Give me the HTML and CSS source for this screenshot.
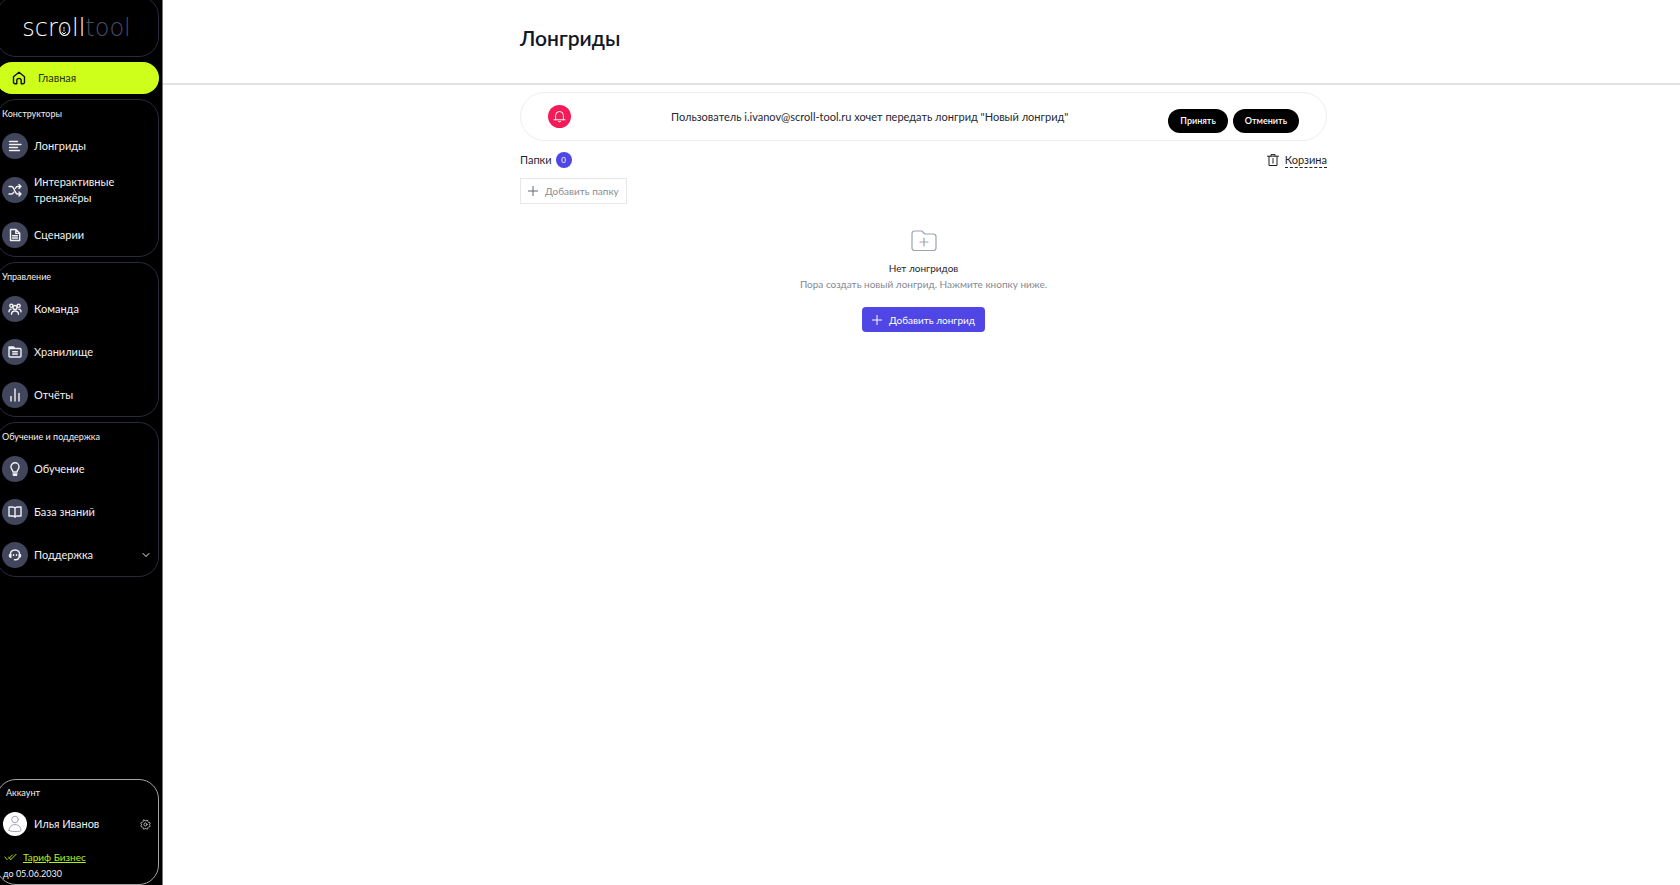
FILE: index.html
```html
<!DOCTYPE html>
<html lang="ru">
<head>
<meta charset="utf-8">
<title>Лонгриды</title>
<meta name="viewport" content="width=device-width, initial-scale=1">
<link rel="stylesheet" href="styles.css">
</head>
<body>
<aside class="sidebar">
  <a class="panel logo" href="#"><span class="logo-main">scr<span class="logo-o">o<svg class="logo-dots" viewBox="0 0 4 8"><path d="M2 .5v1M2 3v1M.5 5.500 2 7l1.500-1.500"/></svg></span>ll</span><span class="logo-tail">tool</span></a>
  <a class="home" href="#">
    <svg class="home-icon" viewBox="0 0 14 14"><path d="M1.500 5.800 7 1.200l5.500 4.600v5.400a1.500 1.500 0 0 1-1.500 1.500H9.200V9.600a2.200 2.200 0 0 0-4.400 0v3.100H3a1.500 1.500 0 0 1-1.500-1.500z"/></svg>
    Главная
  </a>
  <nav class="panel group">
    <h2 class="group-title">Конструкторы</h2>
    <a class="item" href="#"><span class="disc"><svg viewBox="0 0 14 14"><path d="M1.500 2.500h8M1.500 5.500h11.500M1.500 8.500h8M1.500 11.500h10"/></svg></span>Лонгриды</a>
    <a class="item" href="#"><span class="disc"><svg viewBox="0 0 14 14"><path d="M1 3.500h2.500c3 0 3 7.500 6 7.500H13M1 11h2.500c1 0 1.700-.8 2.200-1.800M7.500 5.300c.5-1 1-1.800 2-1.800H13M11 1.500l2 2-2 2M11 9l2 2-2 2"/></svg></span>Интерактивные тренажёры</a>
    <a class="item" href="#"><span class="disc"><svg viewBox="0 0 14 14"><path d="M2.500 1.500h5.500l3.700 3.700v7.300H2.500zM7.800 1.700v3.700h3.700M4.500 7.700h5M4.500 10h5"/></svg></span>Сценарии</a>
  </nav>
  <nav class="panel group">
    <h2 class="group-title">Управление</h2>
    <a class="item" href="#"><span class="disc"><svg viewBox="0 0 14 14"><circle cx="7" cy="5.500" r="2"/><circle cx="3.400" cy="3.800" r="1.600"/><circle cx="10.600" cy="3.800" r="1.600"/><path d="M3.500 12.300c0-4.400 7-4.400 7 0M1 9.800c0-1.600.7-2.500 2.200-2.700M13 9.800c0-1.600-.7-2.500-2.200-2.700"/></svg></span>Команда</a>
    <a class="item" href="#"><span class="disc"><svg viewBox="0 0 14 14"><path d="M1 2h4.500l1.300 1.500H12a1 1 0 0 1 1 1V11a1 1 0 0 1-1 1H2a1 1 0 0 1-1-1zM1 3.500h5M4.700 6.700h4.600M4.700 9h4.600"/></svg></span>Хранилище</a>
    <a class="item" href="#"><span class="disc"><svg viewBox="0 0 14 14"><path d="M3 8.500V13M7 1v12M11 5.500V13"/></svg></span>Отчёты</a>
  </nav>
  <nav class="panel group">
    <h2 class="group-title">Обучение и поддержка</h2>
    <a class="item" href="#"><span class="disc"><svg viewBox="0 0 14 14"><path d="M5 10C5 8 3 7.500 3 4.800a4 4 0 0 1 8 0C11 7.500 9 8 9 10zM5 12h4M5.500 13.500h3"/></svg></span>Обучение</a>
    <a class="item" href="#"><span class="disc"><svg viewBox="0 0 14 14"><path d="M7 3.200C6.500 2.400 5.700 2 4.700 2H1v9h4c1 0 1.600.4 2 1.200.4-.8 1-1.200 2-1.200h4V2H9.300C8.300 2 7.500 2.400 7 3.200zM7 3.200v9"/></svg></span>База знаний</a>
    <a class="item" href="#"><span class="disc"><svg viewBox="0 0 14 14"><path d="M2.500 8.500C1.500 4 4 2 7 2s5.500 2 4.500 6.500M2.800 6.200C1 6.200.8 9 2.800 9.300zM11.200 6.200c1.800 0 2 2.800 0 3.100zM11 9.500c-.5 1.500-1.500 2.200-3 2.200M6.500 11.700H8M5.500 6.800v.6M8.500 6.800v.6"/></svg></span>Поддержка<svg class="chevron" viewBox="0 0 8 8"><path d="m1 2.500 3 3 3-3"/></svg></a>
  </nav>
  <section class="panel account">
    <h2 class="account-title">Аккаунт</h2>
    <div class="user">
      <span class="avatar"><svg viewBox="0 0 24 24"><circle cx="12" cy="7.500" r="3.300"/><path d="M6 18.500c0-8 12-8 12 0 0 1.500-12 1.500-12 0z"/></svg></span>
      <span class="user-name">Илья Иванов</span>
      <button class="gear" aria-label="Настройки"><svg viewBox="0 0 12 12"><path d="m4.800 1.200.4.800h1.600l.4-.8 1.500.6-.1 1 1 1 1-.1.500 1.500-.8.500v.9l.8.600-.6 1.500-1-.1-1 1 .1 1-1.500.5-.5-.8H5.300l-.5.8-1.500-.6.100-1-1-1-1 .1-.5-1.500.8-.5v-1l-.8-.5.600-1.500 1 .1 1-1-.1-.9z"/><circle cx="6" cy="6" r="1.700"/></svg></button>
    </div>
    <div class="plan"><svg viewBox="0 0 14 8"><path d="m1 4 2.500 3M5 4l2.300 3L13 1M5.500 5.500 9 1.800"/></svg><a href="#">Тариф Бизнес</a></div>
    <p class="until">до 05.06.2030</p>
  </section>
</aside>
<main class="main">
  <header class="topbar"><div class="wrap"><h1>Лонгриды</h1></div></header>
  <div class="content"><div class="wrap">
    <section class="notice">
      <span class="bell"><svg viewBox="0 0 14 14"><path d="M1 10.500h12M2.800 10.500V5.800a4.200 4.200 0 0 1 8.400 0v4.700M5.800 12.400q1.200 1 2.400 0"/></svg></span>
      <p>Пользователь i.ivanov@scroll-tool.ru хочет передать лонгрид "Новый лонгрид"</p>
      <div class="actions"><button>Принять</button><button>Отменить</button></div>
    </section>
    <div class="folders">
      <h2>Папки</h2><span class="count">0</span>
      <a class="trash" href="#"><svg viewBox="0 0 12 12"><path d="M.5 2.200h11M4 2V.6h4V2M2 2.500v9h8v-9M6 4.500v1M6 6.500v2.700"/></svg><span>Корзина</span></a>
    </div>
    <button class="add-folder"><svg viewBox="0 0 10 10"><path d="M5 0v10M0 5h10"/></svg>Добавить папку</button>
    <section class="empty">
      <svg class="empty-icon" viewBox="0 0 26 22"><path d="M1 3.500A2.500 2.500 0 0 1 3.500 1h7.300l3 3h8.700A2.500 2.500 0 0 1 25 6.500V18a2.500 2.500 0 0 1-2.500 2.500h-19A2.500 2.500 0 0 1 1 18zM13 8v8M9 12h8"/></svg>
      <h3>Нет лонгридов</h3>
      <p>Пора создать новый лонгрид. Нажмите кнопку ниже.</p>
      <button class="add-main"><svg viewBox="0 0 10 10"><path d="M5 0v10M0 5h10"/></svg>Добавить лонгрид</button>
    </section>
  </div></div>
</main>
</body>
</html>
```
FILE: styles.css
```css
* { box-sizing: border-box; }
body { margin: 0; min-height: 100vh; display: flex; background: #fff; color: #27272f; font: 11px/16px Lato, "Open Sans", sans-serif; }
h1, h2, h3, p { margin: 0; }
a { color: inherit; text-decoration: none; }
button { font: inherit; border: 0; margin: 0; cursor: pointer; }
svg { display: block; fill: none; stroke: currentColor; stroke-linecap: round; stroke-linejoin: round; flex: none; }

.sidebar { width: 163px; flex: none; min-height: 100vh; background: #000; color: #f1f1f1; border-right: 1px solid #777; padding-right: 3px; display: flex; flex-direction: column; gap: 5px; overflow: hidden; }
.panel { border: 1px solid #292b3a; border-radius: 20px; margin-left: -4px; padding-left: 5px; }
.logo { height: 61px; margin-top: -4px; padding: 3px 2px 0 0; display: flex; align-items: center; justify-content: center; font: 300 24px/30px "DejaVu Sans Light", "DejaVu Sans", sans-serif; }
.logo-main { color: #fff; }
.logo-o { position: relative; }
.logo-dots { position: absolute; left: 5px; top: 13px; width: 4px; height: 8px; }
.logo-tail { color: #4a4e6c; }
.home { height: 32px; margin-left: -4px; padding-left: 16px; display: flex; align-items: center; gap: 12px; border-radius: 16px; background: #ceff1a; color: #26300b; }
.home-icon { width: 14px; height: 14px; color: #111; stroke-width: 1.400; }
.group { padding-top: 6px; }
.group-title, .account-title { font-size: 9px; line-height: 16px; font-weight: 400; }
.group-title { margin-bottom: 2px; }
.item { min-height: 43px; padding: 5px 8px 5px 0; display: flex; align-items: center; gap: 6px; }
.disc { width: 26px; height: 26px; border-radius: 50%; background: #42465d; display: grid; place-items: center; flex: none; }
.item:nth-of-type(2) { padding-block: 7px; }
.disc svg { width: 14px; height: 14px; stroke-width: 1.400; }
.chevron { width: 8px; height: 8px; margin-left: auto; }
.account { margin-top: auto; border-color: #a5a5a5; padding: 5px 7px 3px 6px; }
.account-title { padding-left: 3px; }
.user { display: flex; align-items: center; height: 46px; gap: 7px; }
.avatar { width: 24px; height: 24px; border-radius: 50%; background: #fff; color: #9ea3b5; }
.gear { margin-left: auto; padding: 0; color: #ccc; background: none; }
.gear svg { width: 11px; height: 11px; stroke-width: 0.900; }
.plan { display: flex; align-items: center; gap: 6px; height: 20px; padding-left: 1px; color: #b5ee13; font-size: 10px; }
.plan svg { width: 13px; height: 8px; }
.plan a { text-decoration: underline; }
.until { font-size: 9px; line-height: 14px; }

.main { flex: 1; min-width: 0; }
.topbar { height: 85px; border-bottom: 2px solid #e2e2e2; display: flex; align-items: center; padding: 0 0 7px 4px; }
.content { padding-left: 4px; }
.wrap { width: 100%; max-width: 807px; margin: 0 auto; }
h1 { font-size: 21px; line-height: 28px; font-weight: 600; color: #111827; }
.notice { margin-top: 7px; min-height: 49px; border: 1px solid #eee; border-radius: 25px; padding: 0 27px; display: flex; align-items: center; justify-content: space-between; }
.bell { width: 23px; height: 23px; border-radius: 50%; background: #f41c58; color: #fff; display: grid; place-items: center; }
.bell svg { width: 13px; height: 13px; stroke-width: 1; }
.actions { display: flex; gap: 5px; padding-top: 8px; }
.actions button { height: 24px; padding: 0 12px; border-radius: 12px; background: #000; color: #fff; font-size: 9px; font-weight: 600; }
.folders { display: flex; align-items: center; gap: 4px; margin-top: 11px; }
.folders h2 { font-size: 11px; font-weight: 400; line-height: 16px; }
.count { width: 16px; height: 16px; border-radius: 50%; background: #4f46e5; color: #fff; font-size: 8px; line-height: 16px; text-align: center; }
.trash { margin-left: auto; display: flex; align-items: center; gap: 6px; color: #1d1d22; }
.trash svg { width: 12px; height: 12px; }
.trash span { line-height: 14px; border-bottom: 1px dashed #222; }
.add-folder { margin-top: 10px; height: 26px; padding: 0 7px; border: 1px solid #e5e7eb; background: #fff; color: #8a8d95; font-size: 10px; display: flex; align-items: center; gap: 7px; }
.add-folder svg, .add-main svg { width: 10px; height: 10px; }
.add-folder svg { color: #606873; }
.empty { margin-top: 26px; display: flex; flex-direction: column; align-items: center; font-size: 10px; }
.empty-icon { width: 26px; height: 22px; color: #9ca3af; stroke-width: 1.200; }
.empty h3 { font-size: 10px; line-height: 16px; font-weight: 400; margin-top: 8px; }
.empty p { color: #858990; }
.add-main { margin-top: 15px; height: 25px; padding: 0 10px; border-radius: 4px; background: #4f46e5; color: #fff; font-size: 10px; display: flex; align-items: center; gap: 7px; }
```
